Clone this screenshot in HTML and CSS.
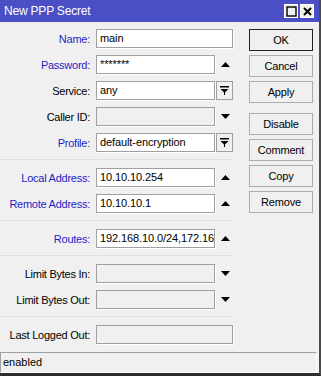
FILE: index.html
```html
<!DOCTYPE html>
<html>
<head>
    <title>New PPP Secret</title>
    <link rel="stylesheet" href="styles.css">
</head>
<body>
<div class="window">
    <div class="titlebar">
        <span class="title">New PPP Secret</span>
        <div class="title-buttons">
            <span class="tbtn">
                <svg width="11" height="11" viewBox="0 0 11 11"><rect x="1" y="1" width="9" height="9" fill="none" stroke="#000" stroke-width="1.4"/></svg>
            </span>
            <span class="tbtn">
                <svg width="11" height="11" viewBox="0 0 11 11"><path d="M2 2 L9 9 M9 2 L2 9" stroke="#000" stroke-width="2"/></svg>
            </span>
        </div>
    </div>

    <div class="content">
        <div class="form">
            <div class="group">
                <div class="row">
                    <span class="label blue">Name:</span>
                    <div class="field wide">main</div>
                </div>
                <div class="row">
                    <span class="label blue">Password:</span>
                    <div class="field">*******</div>
                    <span class="arrow"><svg width="9" height="5" viewBox="0 0 9 5"><polygon points="0,5 4.5,0 9,5" fill="#000"/></svg></span>
                </div>
                <div class="row">
                    <span class="label">Service:</span>
                    <div class="field">any</div>
                    <span class="drop">
                        <svg width="9" height="9" viewBox="0 0 9 9"><rect x="0" y="0" width="9" height="1.5" fill="#000"/><polygon points="0.5,3 8.5,3 4.5,7" fill="#000"/><rect x="4" y="6" width="1" height="3" fill="#000"/></svg>
                    </span>
                </div>
                <div class="row">
                    <span class="label">Caller ID:</span>
                    <div class="field off"></div>
                    <span class="arrow"><svg width="9" height="5" viewBox="0 0 9 5"><polygon points="0,0 9,0 4.5,5" fill="#000"/></svg></span>
                </div>
                <div class="row">
                    <span class="label blue">Profile:</span>
                    <div class="field">default-encryption</div>
                    <span class="drop">
                        <svg width="9" height="9" viewBox="0 0 9 9"><rect x="0" y="0" width="9" height="1.5" fill="#000"/><polygon points="0.5,3 8.5,3 4.5,7" fill="#000"/><rect x="4" y="6" width="1" height="3" fill="#000"/></svg>
                    </span>
                </div>
            </div>

            <div class="sep"></div>

            <div class="group">
                <div class="row">
                    <span class="label blue">Local Address:</span>
                    <div class="field">10.10.10.254</div>
                    <span class="arrow"><svg width="9" height="5" viewBox="0 0 9 5"><polygon points="0,5 4.5,0 9,5" fill="#000"/></svg></span>
                </div>
                <div class="row">
                    <span class="label blue">Remote Address:</span>
                    <div class="field">10.10.10.1</div>
                    <span class="arrow"><svg width="9" height="5" viewBox="0 0 9 5"><polygon points="0,5 4.5,0 9,5" fill="#000"/></svg></span>
                </div>
            </div>

            <div class="sep"></div>

            <div class="group">
                <div class="row">
                    <span class="label blue">Routes:</span>
                    <div class="field">192.168.10.0/24,172.16</div>
                    <span class="arrow"><svg width="9" height="5" viewBox="0 0 9 5"><polygon points="0,5 4.5,0 9,5" fill="#000"/></svg></span>
                </div>
            </div>

            <div class="sep"></div>

            <div class="group">
                <div class="row">
                    <span class="label">Limit Bytes In:</span>
                    <div class="field off"></div>
                    <span class="arrow"><svg width="9" height="5" viewBox="0 0 9 5"><polygon points="0,0 9,0 4.5,5" fill="#000"/></svg></span>
                </div>
                <div class="row">
                    <span class="label">Limit Bytes Out:</span>
                    <div class="field off"></div>
                    <span class="arrow"><svg width="9" height="5" viewBox="0 0 9 5"><polygon points="0,0 9,0 4.5,5" fill="#000"/></svg></span>
                </div>
            </div>

            <div class="sep"></div>

            <div class="group">
                <div class="row">
                    <span class="label">Last Logged Out:</span>
                    <div class="field wide off"></div>
                </div>
            </div>
        </div>

        <div class="buttons">
            <div class="btn-group">
                <button class="btn default">OK</button>
                <button class="btn">Cancel</button>
                <button class="btn">Apply</button>
            </div>
            <div class="btn-group">
                <button class="btn">Disable</button>
                <button class="btn">Comment</button>
                <button class="btn">Copy</button>
                <button class="btn">Remove</button>
            </div>
        </div>
    </div>

    <div class="status">
        <div class="status-box">enabled</div>
    </div>
</div>
</body>
</html>
```

FILE: styles.css
```css
* {
    box-sizing: border-box;
}
body {
    margin: 0;
    background-color: #f0f0f0;
    font-family: "Liberation Sans", Arial, sans-serif;
    font-size: 11px;
    color: #000;
}
.window {
    width: 321px;
    height: 376px;
    display: flex;
    flex-direction: column;
    background-color: #f0f0f0;
    border-right: 2px solid #4a4a4a;
    border-bottom: 3px solid #2e2e2e;
}
.titlebar {
    height: 22px;
    background-color: #4a4fc5;
    color: #fff;
    display: flex;
    align-items: center;
    justify-content: space-between;
    padding: 0 5px 0 4px;
    font-size: 12px;
    letter-spacing: -0.2px;
}
.title-buttons {
    display: flex;
    gap: 2px;
}
.tbtn {
    width: 14px;
    height: 14px;
    background-color: #f0f0f0;
    border: 1px solid #fff;
    display: flex;
    align-items: center;
    justify-content: center;
}
.content {
    flex: 1;
    display: flex;
    padding-top: 7px;
}
.form {
    width: 248px;
}
.group {
    display: flex;
    flex-direction: column;
    gap: 7px;
}
.row {
    display: flex;
    align-items: center;
    height: 19px;
}
.label {
    width: 90px;
    margin-right: 6px;
    text-align: right;
    white-space: nowrap;
    letter-spacing: -0.25px;
}
.blue {
    color: #1f1fc8;
}
.field {
    width: 119px;
    height: 19px;
    border: 1px solid #a0a0a0;
    box-shadow: 1px 1px 0 #fff;
    background-color: #fff;
    padding: 0 3px;
    line-height: 17px;
    white-space: nowrap;
    overflow: hidden;
    letter-spacing: -0.1px;
}
.field.wide {
    width: 137px;
}
.field.off {
    background-color: #f0f0f0;
}
.arrow {
    width: 18px;
    display: flex;
    justify-content: center;
    padding-left: 2px;
}
.drop {
    width: 17px;
    height: 19px;
    margin-left: 1px;
    border: 1px solid #a0a0a0;
    background-color: #f0f0f0;
    display: flex;
    align-items: center;
    justify-content: center;
}
.sep {
    width: 232px;
    height: 1px;
    background-color: #dedede;
    margin: 7px 0 8px 0;
}
.buttons {
    width: 64px;
    margin-left: 1px;
    display: flex;
    flex-direction: column;
    gap: 10px;
}
.btn-group {
    display: flex;
    flex-direction: column;
    gap: 4px;
}
.btn {
    height: 22px;
    border: 1px solid #adadad;
    background-color: #f0f0f0;
    font-family: "Liberation Sans", Arial, sans-serif;
    font-size: 11px;
    letter-spacing: -0.2px;
    color: #000;
    padding: 0;
}
.btn.default {
    border: 1px solid #222;
}
.status {
    height: 21px;
    padding-right: 2px;
}
.status-box {
    height: 21px;
    border-top: 1px solid #a0a0a0;
    border-left: 1px solid #a0a0a0;
    border-right: 1px solid #fff;
    border-bottom: 1px solid #fff;
    padding-left: 2px;
    line-height: 19px;
}
```
